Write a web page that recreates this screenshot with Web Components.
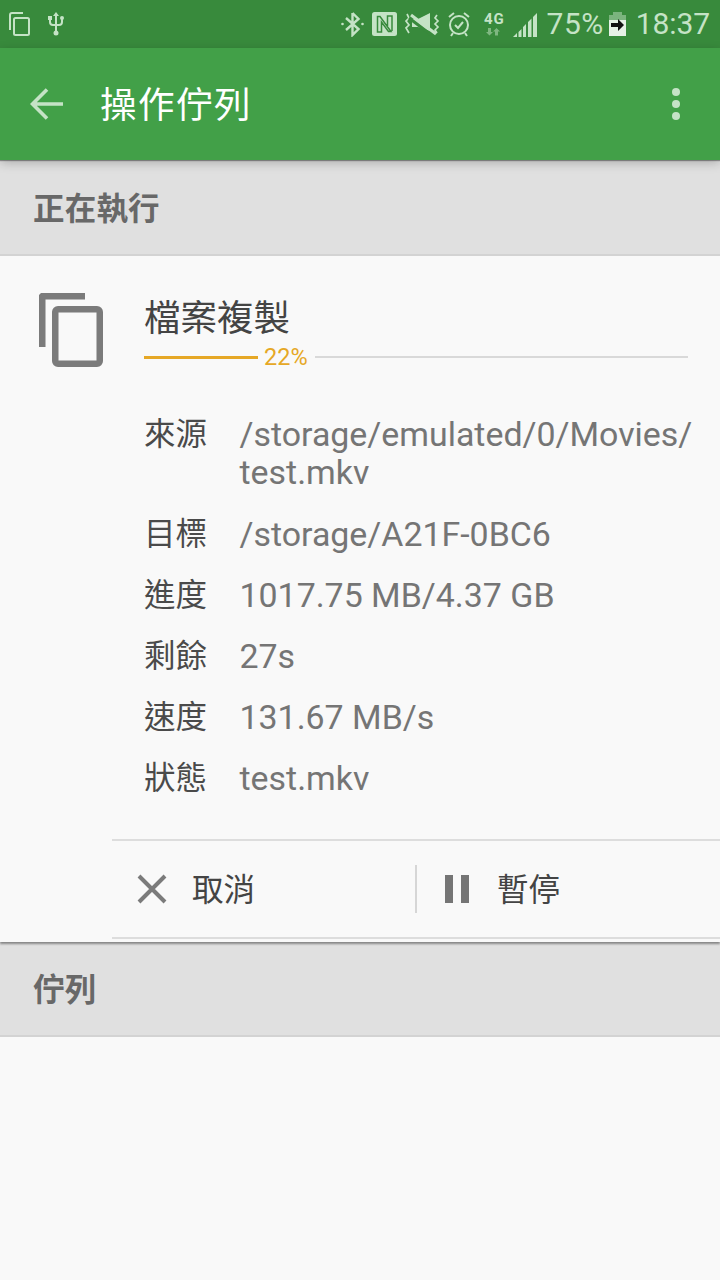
<!DOCTYPE html>
<html lang="zh-Hant"><head><meta charset="utf-8">
<style>
html,body{margin:0;padding:0;background:#f9f9f9}
body{width:720px;height:1280px;overflow:hidden;font-family:Roboto,"Noto Sans CJK TC",sans-serif;display:flex;flex-direction:column}
</style></head><body>
<app-statusbar></app-statusbar>
<app-toolbar title="操作佇列"></app-toolbar>
<section-head first>正在執行</section-head>
<op-card title="檔案複製" percent="22">
  <info-row label="來源" first>/storage/emulated/0/Movies/<br>test.mkv</info-row>
  <info-row label="目標">/storage/A21F-0BC6</info-row>
  <info-row label="進度">1017.75 MB/4.37 GB</info-row>
  <info-row label="剩餘">27s</info-row>
  <info-row label="速度">131.67 MB/s</info-row>
  <info-row label="狀態">test.mkv</info-row>
</op-card>
<section-head>佇列</section-head>
<script>
function def(name, html){
  customElements.define(name, class extends HTMLElement{
    constructor(){super();this.attachShadow({mode:'open'});}
    connectedCallback(){this.shadowRoot.innerHTML = typeof html==='function'?html(this):html;}
  });
}
const C='#c5e3c6';
const BG='#388a3c';
def('app-statusbar',`<style>
:host{display:flex;align-items:center;height:48px;background:${BG};color:${C};padding:0 10px 0 9px;box-sizing:border-box;flex:none}
svg{display:block;flex:none}
.sp{flex:1}
.t{font:400 30px/48px Roboto,sans-serif;white-space:nowrap}
</style>
<svg width="21" height="24" viewBox="0 0 21 24" fill="none" stroke="${C}" stroke-width="2"><path d="M1 18V3a2 2 0 0 1 2-2h11"/><rect x="5" y="6" width="15" height="17" rx="1.5"/></svg>
<svg style="margin-left:17px" width="18" height="24" viewBox="0 0 18 24" fill="none" stroke="${C}" stroke-width="2"><path d="M9 3v18M3 7v3q0 3 3 3h6q3 0 3-3V7"/><path d="M9 0l3 4H6z" fill="${C}" stroke="none"/><circle cx="9" cy="21" r="2.500" fill="${C}" stroke="none"/><rect x="1" y="4" width="4" height="4" fill="${C}" stroke="none"/><circle cx="15" cy="6" r="2" fill="${C}" stroke="none"/></svg>
<span class="sp"></span>
<svg width="23" height="26" viewBox="0 0 23 26" fill="none" stroke="${C}" stroke-width="2.400"><path d="M11.500 2v22l6-6L5 7M11.500 2l6 6L5 19"/><circle cx="1.500" cy="13" r="1.300" fill="${C}" stroke="none"/><circle cx="21.500" cy="13" r="1.300" fill="${C}" stroke="none"/></svg>
<svg style="margin-left:8px" width="25" height="24" viewBox="0 0 25 24"><rect width="25" height="24" rx="2.500" fill="${C}"/><path d="M5.500 20V4.500H8L19 19.500H16.500L9.500 10V20zM15.500 14V4h4.500v15" fill="none" stroke="${BG}" stroke-width="1.500"/></svg>
<svg style="margin-left:7px" width="36" height="24" viewBox="0 0 36 24" fill="none" stroke="${C}" stroke-width="1.700"><path d="M3 2l2 4-3 3 3 4-3 3 3 5"/><path d="M33 3l-2 3 3 3-3 3 3 3-3 3 2 3"/><path d="M8 7h6L26 1v18L14 15H8z" fill="${C}" stroke="none"/><path d="M5 6l25 19" stroke="${BG}" stroke-width="3"/><path d="M7 3l25 19" stroke="${C}" stroke-width="3"/></svg>
<svg style="margin-left:8px" width="22" height="25" viewBox="0 0 22 25" fill="none" stroke="${C}" stroke-width="2"><circle cx="11" cy="13" r="9"/><path d="M7 13l3 3 5-6"/><path d="M1 5l5-4M21 5l-5-4M5 21l-2 3M17 21l2 3"/></svg>
<svg style="margin-left:14px" width="20" height="30" viewBox="0 0 20 30"><text x="0" y="15" font-family="Roboto" font-weight="700" font-size="15" letter-spacing=".8" fill="${C}">4G</text><path d="M4 19h3v4h2l-3.500 3.500L2 23h2zM14 26.500h-3v-4H9l3.500-3.500L16 22.500h-2z" fill="${C}" opacity=".5"/></svg>
<svg style="margin-left:9px" width="25" height="25" viewBox="0 0 25 25" fill="${C}"><path d="M0 25l4-4v4zM5.500 25v-5l3-3v8zM10 25V15l3-3v13zM15 25V10l3.500-3.500V25zM20 25V5l4-4v24z"/></svg>
<span class="t" style="margin-left:9px;letter-spacing:.5px">75%</span>
<svg style="margin-left:5px" width="17" height="24" viewBox="0 0 17 24"><path d="M4 3V0h9v3h4v8H0V3z" fill="#7bb47e"/><rect y="8" width="17" height="16" fill="#e6f1e6"/><path d="M2 11h7V7l6 6-6 6v-4H2z" fill="#111"/></svg>
<span class="t" style="margin-left:10px;letter-spacing:-.1px">18:37</span>`);
def('app-toolbar',t=>`<style>
:host{display:flex;align-items:center;height:112px;box-sizing:border-box;background:#42a048;flex:none;position:relative;z-index:2;box-shadow:0 1px 1px rgba(0,0,0,.35),0 3px 10px rgba(0,0,0,.22)}
.b{width:100px;flex:none;display:flex;padding-left:30px;box-sizing:border-box}
.ti{flex:1;color:#fff;font:400 36.500px/1 "Noto Sans CJK TC",sans-serif;letter-spacing:1.500px;margin-top:-2px}
.m{width:12px;margin-right:38px}
</style>
<div class="b"><svg width="34" height="32" viewBox="0 0 34 32" fill="none" stroke="${C}" stroke-width="3.600"><path d="M33 16H3M17 1.500L2.500 16 17 30.500"/></svg></div>
<div class="ti">${t.getAttribute('title')}</div>
<svg class="m" width="12" height="36" viewBox="0 0 12 36" fill="${C}" style="height:36px"><circle cx="6" cy="6" r="4"/><circle cx="6" cy="18" r="4"/><circle cx="6" cy="30" r="4"/></svg>`);
def('section-head',`<style>
:host{display:flex;align-items:center;box-sizing:border-box;height:95px;background:#e0e0e0;border-bottom:2px solid #d3d3d3;padding:0 0 2px 33px;color:#686868;font:700 31.500px/1 "Noto Sans CJK TC",sans-serif;flex:none;letter-spacing:.2px}
:host([first]){height:96px;padding-bottom:0}
</style><slot></slot>`);
def('op-card',t=>`<style>
:host{display:block;box-sizing:border-box;height:686px;background:#f9f9f9;flex:none;position:relative;z-index:1;box-shadow:0 2px 2px rgba(0,0,0,.4)}
.top{display:flex;padding:37px 28px 0 39px}
.ic{flex:none;width:105px}
.main{flex:1;min-width:0}
h2{margin:-2px 0 3px;font:400 36.500px/50px "Noto Sans CJK TC",sans-serif;color:#444;white-space:nowrap}
.pr{display:flex;align-items:center;height:26px;margin:2px 4px 0 0;gap:6px}
.pr i{display:block;height:3px}
.a{width:114px;background:#e6a826}
.p{color:#e6a826;font:400 23.500px/26px Roboto,sans-serif;width:45px;white-space:nowrap}
.r{flex:1;height:2px!important;background:#d9d9d9}
.rows{display:flex;flex-direction:column;margin-top:46px}
.act{position:absolute;left:112px;right:0;top:583px;height:100px;box-sizing:border-box;border-top:2px solid #ddd;border-bottom:2px solid #ddd;display:flex;align-items:center;color:#444;font:400 31.500px/1 "Noto Sans CJK TC",sans-serif}
.act span{margin-top:-2px}
.btn{display:flex;align-items:center;box-sizing:border-box}
.c{width:303px;padding-left:25px;gap:25px}
.d{width:2px;height:48px;background:#d6d6d6;flex:none}
.q{padding-left:28px;gap:28px}
</style>
<div class="top"><div class="ic"><svg width="64" height="74" viewBox="0 0 64 74" style="display:block"><path d="M2 0h44v6.500H6.500V54H0V2z" fill="#7b7b7b"/><path fill-rule="evenodd" d="M19 13h39a6 6 0 0 1 6 6v49a6 6 0 0 1-6 6H19a6 6 0 0 1-6-6V19a6 6 0 0 1 6-6zm0.500 6.500v48h38v-48z" fill="#7b7b7b"/></svg></div>
<div class="main"><h2>${t.getAttribute('title')}</h2>
<div class="pr"><i class="a"></i><span class="p">${t.getAttribute('percent')}%</span><i class="r"></i></div>
<div class="rows"><slot></slot></div></div></div>
<div class="act"><div class="btn c"><svg width="30" height="30" viewBox="0 0 30 30" stroke="#7b7b7b" stroke-width="4" fill="none"><path d="M2 2l26 26M28 2L2 28"/></svg><span>取消</span></div><div class="d"></div>
<div class="btn q"><svg width="24" height="28" viewBox="0 0 24 28" fill="#757575"><rect width="8" height="28"/><rect x="16" width="8" height="28"/></svg><span>暫停</span></div></div>`);
def('info-row',t=>`<style>
:host{display:flex;font:400 33.900px/38px Roboto,"Noto Sans CJK TC",sans-serif;color:#757575;margin-bottom:23px}
:host([first]){margin-bottom:24px}
:host(:last-child){margin-bottom:0}
b{font:400 31.500px/38px "Noto Sans CJK TC",sans-serif;color:#4a4a4a;width:95.500px;margin-top:-4px;flex:none;white-space:nowrap}
span{white-space:nowrap}
</style><b>${t.getAttribute('label')}</b><span><slot></slot></span>`);
</script>
</body></html>
